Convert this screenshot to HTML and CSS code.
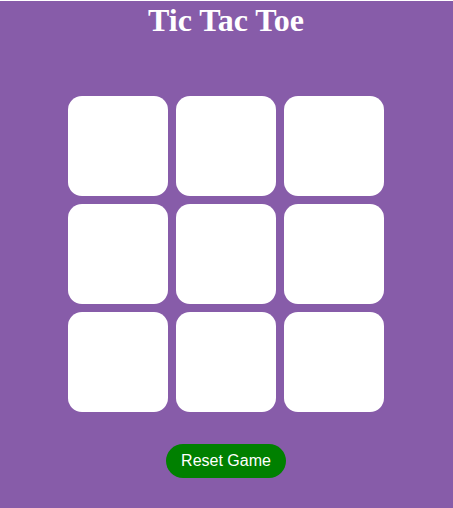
FILE: index.html
```html
<!DOCTYPE html>
<html>
<head>
<meta charset="utf-8">
<link rel="stylesheet" href="styles.css">
</head>
<body>
<div class="app">
  <h1 class="title">Tic Tac Toe</h1>
  <div class="board">
    <div class="cell"></div><div class="cell"></div><div class="cell"></div>
    <div class="cell"></div><div class="cell"></div><div class="cell"></div>
    <div class="cell"></div><div class="cell"></div><div class="cell"></div>
  </div>
  <button class="reset">Reset Game</button>
</div>
</body>
</html>
```
FILE: styles.css
```css
html, body {
  margin: 0;
  padding: 0;
  background: #ffffff;
}
.app {
  margin-top: 1px;
  height: 507px;
  padding-right: 1px;
  background: #875ca9;
  display: flex;
  flex-direction: column;
  align-items: center;
}
.title {
  margin: 0;
  font-family: "Liberation Serif", serif;
  font-weight: bold;
  font-size: 32px;
  line-height: 38px;
  color: #ffffff;
}
.board {
  margin-top: 57px;
  display: grid;
  grid-template-columns: repeat(3, 100px);
  grid-auto-rows: 100px;
  gap: 8px;
}
.cell {
  background: #ffffff;
  border-radius: 14px;
}
.reset {
  margin-top: 32px;
  width: 120px;
  height: 34px;
  border: none;
  border-radius: 17px;
  background: #008000;
  color: #ffffff;
  font-family: "Liberation Sans", sans-serif;
  font-size: 16px;
  padding: 0;
}
```
